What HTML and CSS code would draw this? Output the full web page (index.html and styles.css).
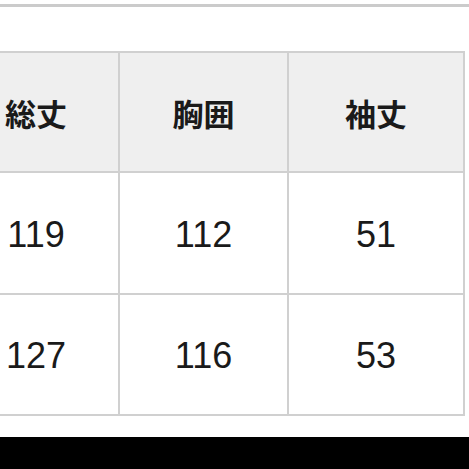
FILE: index.html
```html
<!DOCTYPE html>
<html lang="ja">
<head>
<meta charset="utf-8">
<link rel="stylesheet" href="styles.css">
</head>
<body>
<div class="page">
  <div class="rule"></div>
  <div class="size-table">
    <div class="cell head">総丈</div>
    <div class="cell head">胸囲</div>
    <div class="cell head">袖丈</div>
    <div class="cell num">119</div>
    <div class="cell num">112</div>
    <div class="cell num">51</div>
    <div class="cell num">127</div>
    <div class="cell num">116</div>
    <div class="cell num">53</div>
  </div>
  <div class="spacer"></div>
  <div class="bottom-bar"></div>
</div>
</body>
</html>
```
FILE: styles.css
```css
html, body {
  margin: 0;
  padding: 0;
  background: #ffffff;
  overflow: hidden;
}
.page {
  width: 469px;
  height: 469px;
  display: flex;
  flex-direction: column;
  overflow: hidden;
}
.rule {
  margin-top: 4px;
  height: 3px;
  background: #cbcbcb;
  flex: none;
}
.size-table {
  margin-top: 44px;
  margin-left: -48px;
  width: max-content;
  display: grid;
  grid-template-columns: 164px 167px 174px;
  grid-template-rows: 118px 120px 119px;
  gap: 2px;
  padding: 2px;
  background: #d0d0d0;
  flex: none;
}
.cell {
  display: flex;
  align-items: center;
  justify-content: center;
  background: #ffffff;
  color: #1a1a1a;
}
.head {
  background: #efefef;
  font-family: "Noto Sans CJK JP", "Noto Sans", sans-serif;
  font-weight: 700;
  font-size: 31px;
}
.num {
  font-family: "Liberation Sans", Arial, sans-serif;
  font-size: 36px;
  padding-top: 3px;
}
.spacer {
  flex: 1;
}
.bottom-bar {
  height: 32px;
  background: #000000;
  flex: none;
}
```
